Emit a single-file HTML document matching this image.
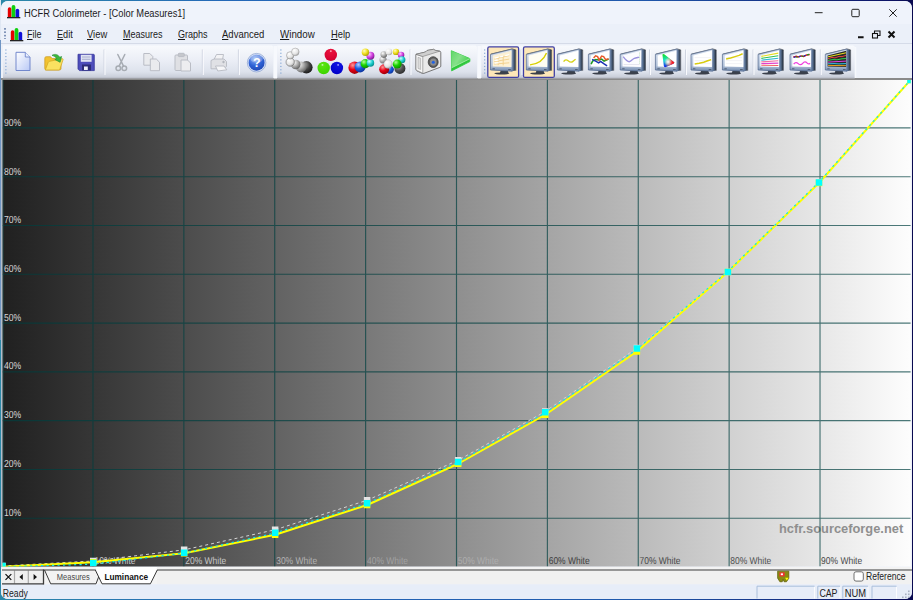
<!DOCTYPE html>
<html lang="en">
<head>
<meta charset="utf-8">
<title>HCFR Colorimeter - [Color Measures1]</title>
<style>
html,body{margin:0;padding:0;}
body{width:913px;height:600px;overflow:hidden;background:linear-gradient(90deg,#dfe7f3 0,#dfe7f3 1px,transparent 1px) 0 0/913px 40px no-repeat,linear-gradient(90deg,#6f95c4 0,#6f95c4 1px,transparent 1px) 0 40px/913px 300px no-repeat,linear-gradient(90deg,#2c88a8 0%,#2468b8 25%,#1f58ac 70%,#0c1468 97%,#0a0a50 100%);font-family:"Liberation Sans",sans-serif;position:relative;}
#win{position:absolute;left:1px;top:1px;width:911px;height:598px;background:#eef2fa;border-radius:7px 7px 7px 7px;overflow:hidden;}
.abs{position:absolute;}
#title{position:absolute;left:0;top:0;width:911px;height:23px;background:#eff3fb;}
#title .txt{position:absolute;left:22.9px;top:6.9px;font-size:10px;color:#1b1b1b;white-space:nowrap;transform-origin:0 0;transform:scaleX(0.932);}
#menubar{position:absolute;left:0;top:23px;width:911px;height:19px;background:#ebf0f9;}
.mi{position:absolute;top:3.9px;font-size:11px;color:#1b1b1b;white-space:nowrap;transform-origin:0 0;}
.mi u{text-decoration:underline;text-underline-offset:1px;}
#tbar{position:absolute;left:0;top:43px;width:911px;height:35px;background:#edf1f9;}
.tb{position:absolute;top:1px;height:32px;background:linear-gradient(#f7f9fd 0%,#eef2f9 45%,#dfe5f0 100%);border-radius:0 3px 3px 0;box-shadow:1px 1px 0 #c9d0dd;}
.sep{position:absolute;top:5px;width:1px;height:24px;background:#b9c0cf;border-right:1px solid #fbfcfe;}
.grip{position:absolute;top:5px;width:3px;height:24px;background-image:radial-gradient(circle at 1px 1px,#7f93b7 0.9px,transparent 1.2px);background-size:3px 3.4px;}
#graph{position:absolute;left:1.5px;top:79px;width:908.25px;height:486.5px;}
#tabs{position:absolute;left:0;top:565.5px;width:911px;height:18px;background:#f0f0f0;}
#status{position:absolute;left:0;top:583px;width:911px;height:15px;background:#e8eef9;}
.ic{position:absolute;}
</style>
</head>
<body>
<div id="win">
<div id="title">
<svg class="abs" style="left:6px;top:4px" width="14" height="14" viewBox="0 0 14 14"><path d="M.8 12V4a1.800 1.800 0 0 1 3.600 0v8z" fill="#e60000"/><path d="M4.600 12V2a1.900 1.900 0 0 1 3.800 0v10z" fill="#10d010"/><path d="M8.600 12V5.500a1.800 1.800 0 0 1 3.600 0V12z" fill="#1010d8"/><rect x="0" y="12" width="13.300" height="1.300" fill="#222"/></svg>
<div class="txt">HCFR Colorimeter - [Color Measures1]</div>
<svg class="abs" style="left:800px;top:0" width="111" height="23" viewBox="0 0 111 23"><g stroke="#222" stroke-width="1" fill="none"><path d="M13.800 11.700h7.800"/><rect x="50.800" y="8.300" width="7.400" height="7.400" rx="1"/><path d="M88.300 8.300l7.400 7.400M95.700 8.300l-7.400 7.400"/></g></svg>
</div>
<div id="menubar">
<div class="grip" style="left:3px;top:4px;height:11px"></div>
<svg class="abs" style="left:9.200px;top:3.800px" width="14" height="14" viewBox="0 0 14 14"><path d="M.8 12V4a1.800 1.800 0 0 1 3.600 0v8z" fill="#e60000"/><path d="M4.600 12V2a1.900 1.900 0 0 1 3.800 0v10z" fill="#10d010"/><path d="M8.600 12V5.500a1.800 1.800 0 0 1 3.600 0V12z" fill="#1010d8"/><rect x="0" y="12" width="13.300" height="1.300" fill="#222"/></svg>
<div class="mi" style="left:26.05px;transform:scaleX(0.82)"><u>F</u>ile</div>
<div class="mi" style="left:55.6px;transform:scaleX(0.833)"><u>E</u>dit</div>
<div class="mi" style="left:86.4px;transform:scaleX(0.854)"><u>V</u>iew</div>
<div class="mi" style="left:121.8px;transform:scaleX(0.818)"><u>M</u>easures</div>
<div class="mi" style="left:176.9px;transform:scaleX(0.82)"><u>G</u>raphs</div>
<div class="mi" style="left:221.4px;transform:scaleX(0.864)"><u>A</u>dvanced</div>
<div class="mi" style="left:279.3px;transform:scaleX(0.887)"><u>W</u>indow</div>
<div class="mi" style="left:329.7px;transform:scaleX(0.852)"><u>H</u>elp</div>
<svg class="abs" style="left:850px;top:4px" width="50" height="14" viewBox="0 0 50 14"><g fill="none" stroke="#111" stroke-width="1.6"><path d="M7 9.300h5.600" stroke-width="2"/><path d="M37.500 3.500l6 6M43.500 3.500l-6 6" stroke-width="2"/></g><g fill="none" stroke="#111" stroke-width="1.100"><rect x="21.500" y="5.500" width="5" height="4.500"/><path d="M23.500 5.500v-2.500h5.500v4.500h-2.500"/></g></svg>
</div>
<div class="abs" style="left:0;top:42px;width:911px;height:1px;background:#d5dbe8"></div>
<div id="tbar">

</div>
<div class="abs" style="left:0;top:77.300px;width:911px;height:1.500px;background:#8a8a8a"></div>
<!--TB-START-->
<svg class="abs" style="left:-1px;top:-1px" width="913" height="80" viewBox="0 0 913 80">
<defs>
<linearGradient id="tbg" x1="0" x2="0" y1="0" y2="1"><stop offset="0" stop-color="#f8fafd"/><stop offset=".45" stop-color="#ebeef6"/><stop offset=".8" stop-color="#dde2ec"/><stop offset=".94" stop-color="#ccd1dc"/><stop offset="1" stop-color="#b4b8c2"/></linearGradient>
<linearGradient id="mfr" x1="0" x2="0" y1="0" y2="1"><stop offset="0" stop-color="#dbe4f1"/><stop offset=".75" stop-color="#b4c3da"/><stop offset="1" stop-color="#6f87ab"/></linearGradient>
<linearGradient id="msd" x1="0" x2="1" y1="0" y2="0"><stop offset="0" stop-color="#6f8bb3"/><stop offset="1" stop-color="#27313f"/></linearGradient>
<radialGradient id="bgray" cx=".35" cy=".3" r=".8"><stop offset="0" stop-color="#fff"/><stop offset=".5" stop-color="#aaa"/><stop offset="1" stop-color="#555"/></radialGradient>
<radialGradient id="bdark" cx=".35" cy=".3" r=".8"><stop offset="0" stop-color="#aaa"/><stop offset=".5" stop-color="#444"/><stop offset="1" stop-color="#111"/></radialGradient>
<radialGradient id="bwht" cx=".35" cy=".3" r=".8"><stop offset="0" stop-color="#fff"/><stop offset=".6" stop-color="#e4e4e4"/><stop offset="1" stop-color="#999"/></radialGradient>
<radialGradient id="bred" cx=".35" cy=".3" r=".8"><stop offset="0" stop-color="#ff9a9a"/><stop offset=".45" stop-color="#e80016"/><stop offset="1" stop-color="#8a0008"/></radialGradient>
<radialGradient id="bgrn" cx=".35" cy=".3" r=".8"><stop offset="0" stop-color="#b5ff9a"/><stop offset=".45" stop-color="#19d400"/><stop offset="1" stop-color="#0a7a00"/></radialGradient>
<radialGradient id="bblu" cx=".35" cy=".3" r=".8"><stop offset="0" stop-color="#9aa5ff"/><stop offset=".45" stop-color="#0018e0"/><stop offset="1" stop-color="#000a80"/></radialGradient>
<radialGradient id="bblu2" cx=".35" cy=".3" r=".8"><stop offset="0" stop-color="#b5d0ff"/><stop offset=".45" stop-color="#1a5fe0"/><stop offset="1" stop-color="#0a2a90"/></radialGradient>
<radialGradient id="bred2" cx=".5" cy=".2" r=".75"><stop offset="0" stop-color="#ffd0d8"/><stop offset=".15" stop-color="#e8103c"/><stop offset="1" stop-color="#d40030"/></radialGradient>
<radialGradient id="bgrn2" cx=".4" cy=".25" r=".75"><stop offset="0" stop-color="#e0ffd0"/><stop offset=".15" stop-color="#58e410"/><stop offset="1" stop-color="#3cd400"/></radialGradient>
<radialGradient id="bblu3" cx=".6" cy=".25" r=".75"><stop offset="0" stop-color="#d0d0ff"/><stop offset=".15" stop-color="#1010e0"/><stop offset="1" stop-color="#0000c8"/></radialGradient>
<radialGradient id="byel" cx=".35" cy=".3" r=".8"><stop offset="0" stop-color="#fffbc0"/><stop offset=".5" stop-color="#f0e020"/><stop offset="1" stop-color="#a09000"/></radialGradient>
<radialGradient id="bmag" cx=".35" cy=".3" r=".8"><stop offset="0" stop-color="#ffd0ff"/><stop offset=".5" stop-color="#d040e0"/><stop offset="1" stop-color="#701080"/></radialGradient>
<radialGradient id="bcyn" cx=".35" cy=".3" r=".8"><stop offset="0" stop-color="#d0ffff"/><stop offset=".5" stop-color="#20d0d0"/><stop offset="1" stop-color="#008080"/></radialGradient>
<radialGradient id="hlp" cx=".4" cy=".25" r=".9"><stop offset="0" stop-color="#8fb3f5"/><stop offset=".5" stop-color="#2f62d6"/><stop offset="1" stop-color="#1b3fa8"/></radialGradient>
<linearGradient id="pgn" x1="0" x2="1" y1="0" y2="1"><stop offset="0" stop-color="#ffffff"/><stop offset="1" stop-color="#b9c9f6"/></linearGradient>
<linearGradient id="ply" x1="0" x2="1" y1="0" y2=".6"><stop offset="0" stop-color="#5fd768"/><stop offset=".5" stop-color="#86e08a"/><stop offset="1" stop-color="#3fd04a"/></linearGradient>
<clipPath id="ciec"><path d="M7.300 6.500c0-1.500 1.300-1.500 2.200-.6l9.300 7.600c.8.700.5 1.300-.6 1.600l-7.300 3.300c-1.300.6-2 0-2.200-1.200z"/></clipPath>
<linearGradient id="cie1" x1="0" x2="0.150" y1="0" y2="1"><stop offset="0.100" stop-color="#10e010"/><stop offset=".5" stop-color="#20e0d0"/><stop offset=".95" stop-color="#1010f0"/></linearGradient>
<radialGradient id="cie2" gradientUnits="userSpaceOnUse" cx="18.700" cy="14.300" r="9"><stop offset="0" stop-color="#ff1010"/><stop offset=".35" stop-color="#ff3030" stop-opacity=".9"/><stop offset="1" stop-color="#ffe000" stop-opacity="0"/></radialGradient>
<radialGradient id="cie3" gradientUnits="userSpaceOnUse" cx="13" cy="13.300" r="4"><stop offset="0" stop-color="#ffffff"/><stop offset="1" stop-color="#ffffff" stop-opacity="0"/></radialGradient>
<g id="mon">
<path d="M10.500 22h7l.8 2.300h-8.600z" fill="#3b4350"/>
<ellipse cx="11.600" cy="24.900" rx="7.500" ry=".95" fill="#3a3f4a"/>
<path d="M22 .6l3.300.9v20.400l-3.300.7z" fill="url(#msd)"/><path d="M.6 5.500L22 .3l3.600 1v20.800" fill="none" stroke="#1d222c" stroke-width=".7" stroke-opacity=".8"/>
<path d="M.3 5.800L22 .5V22.600L.3 21.400z" fill="url(#mfr)" stroke="#4f668c" stroke-width=".7"/>
<path d="M2.300 20.200h2.400M18 20.900h2.600" stroke="#4d5a70" stroke-width=".9"/>
</g>
<path id="scr" d="M2.600 6.900L21.200 2.200V18.400L2.600 17.900z"/>
</defs>
<!--toolbar backgrounds-->
<path d="M3 45.400H271.400a2 2 0 0 1 2 2V78.400H3z" fill="url(#tbg)"/>
<path d="M277.300 45.400H475a2 2 0 0 1 2 2V78.400H277.300z" fill="url(#tbg)"/>
<path d="M481.400 45.400H852.800a2 2 0 0 1 2 2V78.400H481.400z" fill="url(#tbg)"/>
<path d="M275.300 46v32.500M479.200 46v32.500" stroke="#f7f9fd" stroke-width="3.400" fill="none"/><path d="M855.500 47v31" stroke="#f7f9fd" stroke-width="1.500" fill="none"/>
<!--grippers-->
<g fill="#7fa4d4"><g id="grp"><rect x="5.300" y="49.400" width="1.150" height="1.150"/><rect x="5.300" y="52.700" width="1.150" height="1.150"/><rect x="5.300" y="56" width="1.150" height="1.150"/><rect x="5.300" y="59.300" width="1.150" height="1.150"/><rect x="5.300" y="62.600" width="1.150" height="1.150"/><rect x="5.300" y="65.900" width="1.150" height="1.150"/><rect x="5.300" y="69.200" width="1.150" height="1.150"/><rect x="5.300" y="72.500" width="1.150" height="1.150"/></g><use href="#grp" x="275"/><use href="#grp" x="478.800"/></g>
<!--separators-->
<path d="M104 49.500v25M202.300 49.500v25M238.400 49.500v25M410 49.500v25M521 49.500v25M649.500 49.500v25M685.500 49.500v25M753 49.500v25M820.300 49.500v25" stroke="#cfd4e0" stroke-width="1" fill="none"/>
<path d="M105 50v25M203.300 50v25M239.400 50v25M411 50v25M522 50v25M650.500 50v25M686.500 50v25M754 50v25M821.300 50v25" stroke="#fafbfe" stroke-width="1" fill="none"/>
<!--ICONS1-START-->
<!--new-->
<path d="M16 52.300h9.300l4.700 4.700v13.500h-14z" fill="url(#pgn)" stroke="#7288cc" stroke-width="1"/>
<path d="M25.300 52.300v4.700h4.700" fill="#e8eeff" stroke="#7288cc" stroke-width=".9"/>
<!--open-->
<path d="M44.800 58.300c0-1 .6-1.600 1.500-1.600h4.200l1.700 1.900h7.300c.9 0 1.500.6 1.500 1.500v8.400c0 .9-.6 1.500-1.500 1.500h-13.200c-.9 0-1.500-.6-1.500-1.500z" fill="#f2c230" stroke="#c9971a" stroke-width=".7"/>
<path d="M45.300 70l2.900-7.600c.3-.7.800-1 1.500-1.100l12.300-2.600c.9-.2 1.300.4 1 1.200l-3 8.800c-.3.800-.8 1.300-1.600 1.300z" fill="#fbe160" stroke="#d0a520" stroke-width=".7"/>
<path d="M52 55.300c3-1.800 6.300-.8 7.700 2l1.900-.8-1.500 5.800-5.300-2.800 1.900-.9c-.9-1.700-2.700-2.500-4.700-3.300z" fill="#3cb83c" stroke="#1f8a2a" stroke-width=".6" stroke-linejoin="round"/>
<!--save-->
<path d="M78 54.300h15.500a.8.800 0 0 1 .8.800v15.500h-14.800l-1.500-1.500z" fill="#4d4dbb" stroke="#37379a" stroke-width=".8"/>
<rect x="80.800" y="54.800" width="10.800" height="7" fill="#dfe3f3"/>
<path d="M82 57h8.400M82 59.300h8.400" stroke="#9aa0c4" stroke-width=".8"/>
<rect x="82" y="64.500" width="9" height="6" fill="#2c2c78"/>
<path d="M84 66.500h3.800v3.500h-3.800z" fill="#eef0fa"/>
<!--cut-->
<g fill="none" stroke="#a7acb3" stroke-width="1.500" stroke-linecap="round"><path d="M117.800 54.500l5.600 11.300M124.800 54.500l-5.600 11.300"/><circle cx="118.300" cy="68.300" r="2.300"/><circle cx="124.300" cy="68.300" r="2.300"/></g>
<!--copy-->
<g fill="#eaebee" stroke="#babdc5" stroke-width="1"><path d="M143.800 53.500h6l3 3v8.700h-9z"/><path d="M150.300 59h6l3.200 3.200v8.500h-9.200z"/></g>
<!--paste-->
<g stroke="#babdc5" stroke-width="1"><rect x="175" y="55" width="12.500" height="15.500" rx="1" fill="#dfe0e4"/><rect x="178.300" y="53.300" width="6" height="3.300" rx=".8" fill="#c5c7cc"/><path d="M181 60h6.500l3 3v8h-9.500z" fill="#ededf0"/></g>
<!--print-->
<g stroke="#b7bac2" stroke-width=".9"><path d="M214 59.500l2.500-5h7l-1 5z" fill="#f3f3f5"/><path d="M211 60.500l3-1.500h10l2.500 2.500v5l-3 2.300h-12.500z" fill="#e0e1e5"/><path d="M215.500 66l8.500 0 2.800 3.800-9 1.200z" fill="#f6f6f8"/><circle cx="223.500" cy="62" r=".8" fill="#8b8f97"/></g>
<!--help-->
<circle cx="256.600" cy="62.700" r="9.300" fill="#d5e0f7" stroke="#8aa0cf" stroke-width=".7"/>
<circle cx="256.600" cy="62.700" r="8" fill="url(#hlp)"/>
<ellipse cx="256.600" cy="58.800" rx="6.300" ry="3.800" fill="#ffffff" opacity=".28"/><text x="256.700" y="67.300" text-anchor="middle" font-family="Liberation Sans, sans-serif" font-weight="bold" font-size="12.500" fill="#ffffff">?</text>
<!--ICONS1-END-->
<!--ICONS2-START-->
<!--gray balls-->
<circle cx="306.400" cy="67.300" r="6.200" fill="url(#bdark)"/>
<circle cx="301.200" cy="66.900" r="5.500" fill="url(#bgray)" opacity=".95"/>
<circle cx="295.700" cy="64.500" r="4.800" fill="url(#bgray)"/>
<circle cx="290.200" cy="62.100" r="4.200" fill="url(#bwht)" stroke="#555" stroke-width=".5"/>
<circle cx="290.200" cy="55.400" r="3.700" fill="url(#bwht)" stroke="#888" stroke-width=".5"/>
<circle cx="295.300" cy="51.900" r="3.800" fill="url(#bwht)" stroke="#999" stroke-width=".5"/>
<!--rgb balls-->
<circle cx="330.800" cy="54.900" r="6.200" fill="url(#bred2)"/>
<circle cx="323.700" cy="68" r="6.200" fill="url(#bgrn2)"/>
<circle cx="336.900" cy="68" r="6.200" fill="url(#bblu3)"/>
<!--colour balls 1-->
<circle cx="354.600" cy="67.700" r="6.200" fill="url(#bred)"/>
<circle cx="360.100" cy="66.900" r="5.500" fill="url(#bblu2)"/>
<circle cx="365.200" cy="63.700" r="4.600" fill="url(#bgrn)"/>
<circle cx="370.400" cy="62.900" r="3.800" fill="url(#bcyn)"/>
<circle cx="370.400" cy="55.800" r="4" fill="url(#bmag)"/>
<circle cx="365.400" cy="52.300" r="3.700" fill="url(#byel)"/>
<!--colour balls 2-->
<circle cx="389.700" cy="69.600" r="4.200" fill="url(#bblu2)"/>
<circle cx="384.200" cy="69.200" r="5" fill="url(#bred)"/>
<circle cx="399.900" cy="68.400" r="5.500" fill="url(#bdark)" opacity=".9"/>
<circle cx="383" cy="59.800" r="3.600" fill="url(#bgray)" opacity=".9"/>
<circle cx="383.800" cy="54.600" r="3.300" fill="url(#bgray)"/>
<circle cx="388.900" cy="51.900" r="3.300" fill="url(#bwht)"/>
<circle cx="396" cy="51.900" r="3.200" fill="url(#byel)"/>
<circle cx="401.100" cy="55" r="3.200" fill="url(#bmag)"/>
<circle cx="401.900" cy="59.800" r="3.500" fill="url(#bcyn)"/>
<circle cx="397.200" cy="64.100" r="4.500" fill="url(#bgrn)"/>
<circle cx="388.100" cy="64.100" r="4.300" fill="url(#bwht)" stroke="#999" stroke-width=".3"/>
<!--camera-->
<path d="M416 54.300l9.500-2.300 1.500-1.500 6.500-1.200 1.500 1 4.700.9c.7.100 1.100.5 1.100 1.300v13.500c0 .7-.3 1.100-1 1.400l-16 6c-.8.300-1.400.1-2-.2l-5-2.400c-.6-.3-.8-.7-.8-1.400z" fill="#e9e9e9" stroke="#5a5a5a" stroke-width=".8" stroke-linejoin="round"/>
<path d="M416 54.300l6.800 2.200v16.700l-6-2.800c-.6-.3-.8-.7-.8-1.400z" fill="#f6f6f6" stroke="#777" stroke-width=".6"/>
<path d="M418 57.300l2.600.9v11.300l-2.600-1.100z" fill="#dcdcdc" stroke="#999" stroke-width=".5"/>
<path d="M416 54.300l9.500-2.300 1.500-1.500 6.500-1.200 1.500 1 4.700.9-16.900 5.300z" fill="#cfcfcf" stroke="#666" stroke-width=".5"/>
<ellipse cx="433.200" cy="62.100" rx="5" ry="5.400" fill="#5c5c5c" stroke="#333" stroke-width=".7"/>
<ellipse cx="433.300" cy="62.100" rx="3.300" ry="3.600" fill="#8d8d8d"/>
<circle cx="433.300" cy="62.200" r="1.500" fill="#1f62e6"/>
<!--play-->
<path d="M451.300 50.700l18.600 7.900v3l-18.300 9.300z" fill="#2fc63c" stroke="#35cc44" stroke-width=".8" stroke-linejoin="round"/>
<path d="M451.300 50.700l18.600 7.900-18.400 9.200z" fill="url(#ply)"/>
<path d="M451.600 67.800l18.200-9.100" stroke="#b5f2b5" stroke-width=".8" fill="none"/>
<!--ICONS2-END-->
<!--ICONS3-START-->
<!--selected buttons-->
<rect x="487.800" y="46.900" width="30.800" height="30.500" rx="1.500" fill="#fde7b8" stroke="#4040a4" stroke-width="1.300"/>
<rect x="523.500" y="46.900" width="30.800" height="30.500" rx="1.500" fill="#fde7b8" stroke="#4040a4" stroke-width="1.300"/>
<!--monitors-->
<g transform="translate(490.200 48.600)"><use href="#mon"/><use href="#scr" fill="#fdf1d4"/><path d="M4 10.500l15-3.500M4 13l15-2.500M4 15.500l15-1.300M8 8.500v8M13 7.300v9.500" stroke="#f2cf8a" stroke-width=".9" fill="none"/><path d="M4.500 9.500l4-.9M4.500 12l4-.6M4.500 14.500l4-.4M10 8.200l3-.7M15 7l4-1" stroke="#fff" stroke-width="1.200" fill="none"/></g>
<g transform="translate(526 48.600)"><use href="#mon"/><use href="#scr" fill="#fffdf3"/><path d="M4 16.300c6-.5 13-3 16.500-11.800" stroke="#d8d000" stroke-width="1.400" fill="none"/></g>
<g transform="translate(557.100 48.600)"><use href="#mon"/><use href="#scr" fill="#ffffff"/><path d="M6.500 13c1.500-2.200 3-2 4.500-.8s3 2 4.500.8 2.300-1.800 3-2.300" stroke="#d6d21a" stroke-width="1.400" fill="none"/></g>
<g transform="translate(588.100 48.600)"><use href="#mon"/><use href="#scr" fill="#ffffff"/><g fill="none" stroke-width="1.500"><path d="M3 15.500l1.500-3 3-1.500 3 .5 3-1 2.500 2 4.500-2" stroke="#1e9a1e"/><path d="M4 10.800l4 2 2.500 1.500 2-1.500 3.500 2.500 3 2" stroke="#1a32b4"/><path d="M5.500 9.500l2-2.300 2 .8 1.500 3.500 2.500-4 2 .5 2 3 3-.8" stroke="#e65a2a"/></g></g>
<g transform="translate(619.900 48.600)"><use href="#mon"/><use href="#scr" fill="#fcfcff"/><path d="M3.800 15.900h16" stroke="#d6d6e6" stroke-width=".6"/><path d="M19.600 4v12" stroke="#9ad09a" stroke-width=".6" stroke-dasharray="1 1"/><path d="M3.300 8.100c1.500 2 3.500 4.800 6.200 5 1.800-.6 3-2.500 4.900-3.300 1.700-.7 3.400-.9 4.900-1.300" stroke="#8a7fd8" stroke-width="1.400" fill="none" stroke-opacity=".85"/></g>
<g transform="translate(655.100 48.600)"><use href="#mon"/><use href="#scr" fill="#ffffff"/><g clip-path="url(#ciec)"><rect x="6" y="4" width="14" height="16" fill="url(#cie1)"/><rect x="6" y="4" width="14" height="16" fill="url(#cie2)"/><rect x="6" y="4" width="14" height="16" fill="url(#cie3)"/></g></g>
<g transform="translate(690.700 48.600)"><use href="#mon"/><use href="#scr" fill="#ffffff"/><path d="M4 9h16M4 12h16M4 15h16" stroke="#e6e6ee" stroke-width=".5"/><path d="M4 15.300l4.500-.6 4.500-1 4-1.500 3.500-1.200" stroke="#d8cc10" stroke-width="1.500" fill="none"/></g>
<g transform="translate(722.100 48.600)"><use href="#mon"/><use href="#scr" fill="#ffffff"/><path d="M4 9h16M4 12h16M4 15h16" stroke="#e6e6ee" stroke-width=".5"/><path d="M4 10.300l4.500-1 4.500-1.300 4-1.200 3.500-1.600" stroke="#d8cc10" stroke-width="1.500" fill="none"/></g>
<g transform="translate(757.800 48.600)"><use href="#mon"/><use href="#scr" fill="#ffffff"/><g fill="none" stroke-width="1.100"><path d="M3.500 7.800l17-3.300" stroke="#e6dc20"/><path d="M3.500 9.800l17-2.600" stroke="#30c050"/><path d="M3.500 11.600l17-2" stroke="#30b8d8"/><path d="M3.500 13.300l17-1.200" stroke="#f070a0"/><path d="M3.500 15l17-.5" stroke="#e040d0"/><path d="M3.500 16.600l17 .3" stroke="#f06060"/></g></g>
<g transform="translate(789.700 48.600)"><use href="#mon"/><use href="#scr" fill="#ffffff"/><path d="M3.500 8.500l3-.8 2 .6 3-1 2.500.5 3-1.500 3-.5" stroke="#d01818" stroke-width="1.500" fill="none"/><path d="M4 8.800l2-.6M9 8.200l2-.6M14 7.400l2-.7" stroke="#1a30c0" stroke-width="1.300"/><path d="M6.500 8.500l1.500.1M12 7.700l1.500-.2M17.500 6.200l2-.5" stroke="#10a020" stroke-width="1.300"/><path d="M4 15.500c1.500-2 3-2 4.500-.5s3 1.500 4.500-.3 3-1.700 4.500-.2 2 .8 2.800.2" stroke="#f040e0" stroke-width="1.300" fill="none"/></g>
<g transform="translate(825 48.600)"><use href="#mon"/><use href="#scr" fill="#2a2a2a"/><g fill="none" stroke-width="1"><path d="M3 8.200l18-4" stroke="#e8e020"/><path d="M3 10l4-1.200 3 .5 4-1.500 3 .2 4-1.200" stroke="#e04040"/><path d="M3 11.800l5-.8 4 .2 5-1 4-.3" stroke="#30d050"/><path d="M3 13.500l18-1" stroke="#e040e0"/><path d="M3 15.200l6-.2 5 .3 7-.3" stroke="#30c8e8"/><path d="M3 16.800l18 .3" stroke="#e8a020"/></g></g>
<!--ICONS3-END-->
</svg>
<!--TB-END-->
<div id="ledge" class="abs" style="left:0;top:79px;width:1px;height:487px;background:#b4bec9"></div>
<!--GRAPH-START-->
<svg class="abs" style="left:-1px;top:-1px" width="913" height="600" viewBox="0 0 913 600">
<defs><linearGradient id="gbg" x1="0" x2="1" y1="0" y2="0"><stop offset="0" stop-color="#202020"/><stop offset="1" stop-color="#fdfdfd"/></linearGradient><clipPath id="gclip"><rect x="2.5" y="80" width="908.25" height="486.5"/></clipPath></defs>
<rect x="2.5" y="80" width="908.25" height="486.5" fill="url(#gbg)"/>
<g clip-path="url(#gclip)">
<text x="779" y="532.700" font-family="Liberation Sans, sans-serif" font-weight="bold" font-size="12.850" fill="#8f8f8f">hcfr.sourceforge.net</text>
<path d="M92.98 80V566.5M183.86 80V566.5M274.74 80V566.5M365.62 80V566.5M456.50 80V566.5M547.38 80V566.5M638.26 80V566.5M729.14 80V566.5M820.02 80V566.5M2.5 127.92H910.75M2.5 176.71H910.75M2.5 225.50H910.75M2.5 274.29H910.75M2.5 323.08H910.75M2.5 371.87H910.75M2.5 420.66H910.75M2.5 469.45H910.75M2.5 518.24H910.75" stroke="#004040" stroke-opacity=".7" stroke-width="1.15" fill="none"/>
<path d="M3 80V566.5" stroke="#1f4a4a" stroke-width="1" fill="none"/>
<g font-family="Liberation Sans, sans-serif" font-size="10.200" text-rendering="geometricPrecision" fill="#d6d6d6"><text x="4" y="125.9" textLength="17.200" lengthAdjust="spacingAndGlyphs">90%</text><text x="4" y="174.6" textLength="17.200" lengthAdjust="spacingAndGlyphs">80%</text><text x="4" y="223.3" textLength="17.200" lengthAdjust="spacingAndGlyphs">70%</text><text x="4" y="272.0" textLength="17.200" lengthAdjust="spacingAndGlyphs">60%</text><text x="4" y="320.7" textLength="17.200" lengthAdjust="spacingAndGlyphs">50%</text><text x="4" y="369.4" textLength="17.200" lengthAdjust="spacingAndGlyphs">40%</text><text x="4" y="418.1" textLength="17.200" lengthAdjust="spacingAndGlyphs">30%</text><text x="4" y="466.8" textLength="17.200" lengthAdjust="spacingAndGlyphs">20%</text><text x="4" y="515.5" textLength="17.200" lengthAdjust="spacingAndGlyphs">10%</text></g>
<g font-family="Liberation Sans, sans-serif" font-size="10" text-rendering="geometricPrecision"><text x="94.5" y="563.900" fill="#c8c8c8" textLength="41" lengthAdjust="spacingAndGlyphs">10% White</text><text x="185.3" y="563.900" fill="#c8c8c8" textLength="41" lengthAdjust="spacingAndGlyphs">20% White</text><text x="276.2" y="563.900" fill="#b4b4b4" textLength="41" lengthAdjust="spacingAndGlyphs">30% White</text><text x="367.0" y="563.900" fill="#a2a2a2" textLength="41" lengthAdjust="spacingAndGlyphs">40% White</text><text x="457.8" y="563.900" fill="#aeaeae" textLength="41" lengthAdjust="spacingAndGlyphs">50% White</text><text x="548.7" y="563.900" fill="#404040" textLength="41" lengthAdjust="spacingAndGlyphs">60% White</text><text x="639.5" y="563.900" fill="#484848" textLength="41" lengthAdjust="spacingAndGlyphs">70% White</text><text x="730.3" y="563.900" fill="#505050" textLength="41" lengthAdjust="spacingAndGlyphs">80% White</text><text x="821.1" y="563.900" fill="#484848" textLength="41" lengthAdjust="spacingAndGlyphs">90% White</text></g>
<polyline points="2.5,566 93.25,561 184.15,549.85 275.15,529.75 367.1,500.25 458.2,460.25 545.25,411.5 636.9,348 727.9,271.9 819,182.4 910.5,80" fill="none" stroke="#d4d4d4" stroke-width="1" stroke-dasharray="3 3"/>
<polyline points="2.5,566.8 93.25,562.2 184.15,553.3 275.15,534.75 367.1,505 458.2,463.75 545.25,414.75 636.9,351.5 727.9,272 819,183 910.5,80" fill="none" stroke="#ffff00" stroke-width="2" stroke-linejoin="round"/>
<polyline points="2.5,566.8 93.25,564.2 184.15,553.2 275.15,533.05 367.1,503.425 458.2,462.175 545.25,412.8 636.9,349.25 727.9,271.25 819,182 910.5,80" fill="none" stroke="#10e8e8" stroke-width="1.200" stroke-dasharray="2.200 3.300"/>
<path d="M-0.75 562.75h6.5v6.5h-6.5zM90 557.75h6.5v6.5h-6.5zM180.9 546.6h6.5v6.5h-6.5zM271.9 526.5h6.5v6.5h-6.5zM363.85 497h6.5v6.5h-6.5zM454.95 457h6.5v6.5h-6.5zM542 408.25h6.5v6.5h-6.5zM633.65 344.75h6.5v6.5h-6.5zM724.65 268.65h6.5v6.5h-6.5zM815.75 179.15h6.5v6.5h-6.5zM907.25 76.75h6.5v6.5h-6.5z" fill="#e4e4e4"/>
<path d="M-0.75 563.55h6.5v6.5h-6.5zM90 558.95h6.5v6.5h-6.5zM180.9 550.05h6.5v6.5h-6.5zM271.9 531.5h6.5v6.5h-6.5zM363.85 501.75h6.5v6.5h-6.5zM454.95 460.5h6.5v6.5h-6.5zM542 411.5h6.5v6.5h-6.5zM633.65 348.25h6.5v6.5h-6.5zM724.65 268.75h6.5v6.5h-6.5zM815.75 179.75h6.5v6.5h-6.5zM907.25 76.75h6.5v6.5h-6.5z" fill="#ffff00"/>
<path d="M-0.75 562.75h6.5v6.5h-6.5zM90 559.75h6.5v6.5h-6.5zM180.9 549.5h6.5v6.5h-6.5zM271.9 529.5h6.5v6.5h-6.5zM363.85 500h6.5v6.5h-6.5zM454.95 458.75h6.5v6.5h-6.5zM542 409h6.5v6.5h-6.5zM633.65 345.15h6.5v6.5h-6.5zM724.65 268.65h6.5v6.5h-6.5zM815.75 179.15h6.5v6.5h-6.5zM907.25 76.75h6.5v6.5h-6.5z" fill="#00ffff"/>
</g></svg>
<!--GRAPH-END-->
<!--BOTTOM-START-->
<svg class="abs" style="left:-1px;top:565.500px" width="913" height="35" viewBox="0 566.500 913 35">
<rect x="0" y="566.500" width="913" height="17.300" fill="#f3f3f3"/>
<rect x="157" y="570" width="756" height="13.800" fill="#f1f1f1"/>
<rect x="0" y="583.800" width="913" height="17" fill="#e7edf8"/>
<path d="M95.500 566.500H157.300L150.400 583.300H102z" fill="#ffffff"/>
<rect x="2" y="570" width="41" height="13" fill="#efefef"/>
<path d="M14.500 570v13M28.300 570v13" stroke="#a9a9a9" stroke-width="1.200" fill="none"/>
<path d="M2 569.500H95.800M157 569.500H913" stroke="#3c3c3c" stroke-width="1.200" fill="none"/>
<path d="M2 583.400H43.500" stroke="#3c3c3c" stroke-width="1.300" fill="none"/>
<path d="M43.500 569V584" stroke="#3c3c3c" stroke-width="1.300" fill="none"/>
<path d="M44.500 569.500L50.700 583.300H96L98.600 576.500M95.300 569.500L102 583.300H150.400L157.300 569.500" stroke="#3a3a3a" stroke-width="1" fill="none"/>
<g stroke="#111" stroke-width="1.250" fill="none"><path d="M5.500 573.600l5.800 5.800M11.300 573.600l-5.800 5.800"/></g>
<path d="M22.800 573.400v6.200l-3.400-3.100zM33.600 573.400v6.200l3.400-3.100z" fill="#111"/>
<g font-family="Liberation Sans, sans-serif" font-size="8.400">
<text x="56.800" y="579.600" fill="#4a4a4a" textLength="33" lengthAdjust="spacingAndGlyphs">Measures</text>
<text x="104.400" y="579.600" fill="#111" font-weight="bold" textLength="43.700" lengthAdjust="spacingAndGlyphs">Luminance</text>
</g>
<rect x="854" y="571.300" width="9.300" height="9.300" rx="2" fill="#fff" stroke="#606060" stroke-width="0.900"/>
<text x="866" y="579.700" font-family="Liberation Sans, sans-serif" font-size="11" fill="#222" textLength="39.500" lengthAdjust="spacingAndGlyphs">Reference</text>
<g transform="translate(783.300 576.300) scale(1.180) translate(-783.300 -576.300)"><path d="M778.500 571.500h9.500v6l-2 3h-2l-.8-2-.8 2h-2l-1.900-3z" fill="#8a8a10" stroke="#5a5a00" stroke-width=".6"/><rect x="780" y="572.500" width="4.500" height="3.500" fill="#e33"/><rect x="781.200" y="573.400" width="1.800" height="1.500" fill="#fff"/><path d="M784.800 577.200h3l-1.500 2.300z" fill="#ff0"/></g>
<text x="2.800" y="596.200" font-family="Liberation Sans, sans-serif" font-size="10.600" fill="#222" textLength="25" lengthAdjust="spacingAndGlyphs">Ready</text>
<path d="M757 598V585.700H814.500M817.800 598V585.700H840M842.800 598V585.700H868M872 598V585.700H896.500" fill="none" stroke="#a9bedb" stroke-width="1"/><path d="M814.500 586.500V598M840 586.500V598M868 586.500V598M896.500 586.500V598" fill="none" stroke="#fbfcfe" stroke-width="1"/>
<g font-family="Liberation Sans, sans-serif" font-size="10.200" fill="#222" lengthAdjust="spacingAndGlyphs"><text x="819.400" y="596.500" textLength="18.100" lengthAdjust="spacingAndGlyphs">CAP</text><text x="844.700" y="596.500" textLength="21.300" lengthAdjust="spacingAndGlyphs">NUM</text></g>
<g fill="#a9b1c2"><rect x="908" y="590" width="1.600" height="1.600"/><rect x="905" y="593" width="1.600" height="1.600"/><rect x="908" y="593" width="1.600" height="1.600"/><rect x="902" y="596" width="1.600" height="1.600"/><rect x="905" y="596" width="1.600" height="1.600"/><rect x="908" y="596" width="1.600" height="1.600"/></g>
</svg>
<!--BOTTOM-END-->
</div>
</body>
</html>
